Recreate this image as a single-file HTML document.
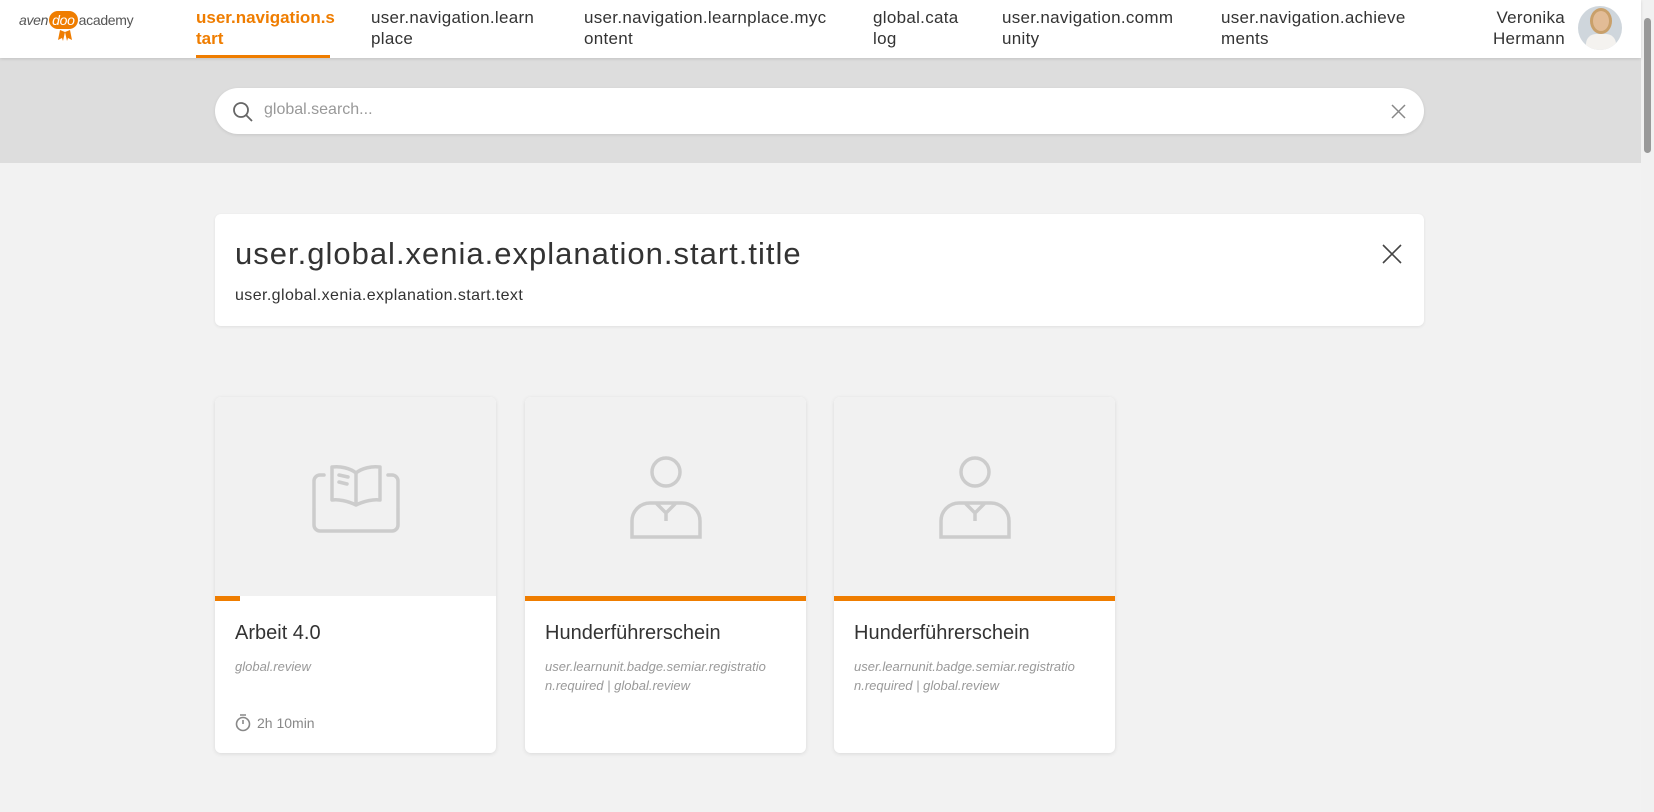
<!DOCTYPE html>
<html><head><meta charset="utf-8"><style>
*{margin:0;padding:0;box-sizing:border-box}
body{width:1654px;height:812px;overflow:hidden;background:#f2f2f2;font-family:"Liberation Sans",sans-serif;color:#333;position:relative}
.hdr{position:absolute;left:0;top:0;width:1641px;height:58px;background:#fff;box-shadow:0 1px 3px rgba(0,0,0,.12);z-index:2}
.nav{position:absolute;top:7px;font-size:17px;letter-spacing:0.3px;line-height:21px;color:#333}
.nav.act{color:#ef7d00;font-weight:bold;letter-spacing:0}
.band{position:absolute;left:0;top:58px;width:1641px;height:105px;background:#ddd}
.search{position:absolute;left:215px;top:88px;width:1209px;height:46px;background:#fff;border-radius:23px;box-shadow:0 1px 3px rgba(0,0,0,.1)}
.search span{position:absolute;left:49px;top:13px;font-size:16px;color:#999}
.exp{position:absolute;left:215px;top:214px;width:1209px;height:112px;background:#fff;border-radius:6px;box-shadow:0 1px 3px rgba(0,0,0,.08)}
.exp h1{position:absolute;left:20px;top:22px;font-size:31px;letter-spacing:1px;font-weight:normal;color:#333}
.exp p{position:absolute;left:20px;top:73px;font-size:16px;letter-spacing:0.4px}
.card{position:absolute;top:397px;width:281px;height:356px;background:#fff;border-radius:6px;box-shadow:0 1px 4px rgba(0,0,0,.1);overflow:hidden}
.img{position:absolute;left:0;top:0;width:100%;height:199px;background:#f1f1f1}
.bar{position:absolute;left:0;top:199px;height:5px;background:#ef7d00}
.ct{position:absolute;left:20px;top:225px;font-size:20px;color:#333}
.cs{position:absolute;left:20px;top:260px;font-size:13px;line-height:19px;font-style:italic;color:#999;width:250px}
.sb{position:absolute;right:0;top:0;width:13px;height:812px;background:#f1f1f1}
</style></head><body>
<div class="hdr">
 <div style="position:absolute;left:19px;top:11px;font-size:14px;color:#555;letter-spacing:-0.3px"><span style="font-style:italic">aven</span><span style="display:inline-block;background:#ef7d00;color:#fff;border-radius:12px;padding:1px 3px;margin:0 1px;font-style:italic">doo</span>academy</div>
 <svg style="position:absolute;left:58px;top:30px" width="14" height="12"><path d="M2 0 L0 10 L4 8 L5 11 L7 2Z M12 0 L14 10 L10 8 L9 11 L7 2Z" fill="#ef7d00"/></svg>
 <div class="nav act" style="left:196px">user.navigation.s<br>tart</div>
 <div style="position:absolute;left:196px;top:55px;width:134px;height:3px;background:#ef7d00"></div>
 <div class="nav" style="left:371px">user.navigation.learn<br>place</div>
 <div class="nav" style="left:584px">user.navigation.learnplace.myc<br>ontent</div>
 <div class="nav" style="left:873px">global.cata<br>log</div>
 <div class="nav" style="left:1002px">user.navigation.comm<br>unity</div>
 <div class="nav" style="left:1221px">user.navigation.achieve<br>ments</div>
 <div class="nav" style="right:76px;text-align:right">Veronika<br>Hermann</div>
 <div style="position:absolute;left:1578px;top:6px;width:44px;height:44px;border-radius:50%;overflow:hidden;background:#cfd6dc">
  <div style="position:absolute;left:15px;top:5px;width:16px;height:20px;border-radius:50%;background:#e2bc96;box-shadow:0 0 0 3px #c9a06a"></div>
  <div style="position:absolute;left:8px;top:28px;width:30px;height:20px;border-radius:10px 10px 0 0;background:#f4f2ef"></div>
 </div>
</div>
<div class="band"></div>
<div class="search">
 <svg style="position:absolute;left:17px;top:13px" width="22" height="22" fill="none" stroke="#666" stroke-width="1.8"><circle cx="9" cy="9" r="7"/><path d="M14 14l6 6"/></svg>
 <span>global.search...</span>
 <svg style="position:absolute;right:18px;top:16px" width="15" height="15" stroke="#888" stroke-width="1.5"><path d="M1 1l13 13M14 1L1 14"/></svg>
</div>
<div class="exp">
 <h1>user.global.xenia.explanation.start.title</h1>
 <p>user.global.xenia.explanation.start.text</p>
 <svg style="position:absolute;right:22px;top:30px" width="20" height="20" stroke="#444" stroke-width="1.6"><path d="M1 1l18 18M19 1L1 19"/></svg>
</div>
<div class="card" style="left:215px">
 <div class="img"><svg style="position:absolute;left:97px;top:66px" width="88" height="70" fill="none" stroke="#ccc" stroke-width="3.5" stroke-linejoin="round" stroke-linecap="round"><path d="M12 12 H8 a6 6 0 0 0-6 6 V62 a6 6 0 0 0 6 6 H80 a6 6 0 0 0 6-6 V18 a6 6 0 0 0-6-6 H76"/><path d="M44 42 C36 38 26 36 20 37 V4 C28 3 38 5 44 10 C50 5 60 3 68 4 V37 C62 36 52 38 44 42Z M44 10 V42"/><path d="M27 12 L36 14 M27 19 L35 21"/></svg></div>
 <div class="bar" style="width:25px"></div>
 <div class="ct">Arbeit 4.0</div>
 <div class="cs">global.review</div>
 <svg style="position:absolute;left:20px;top:317px" width="16" height="18" fill="none" stroke="#888" stroke-width="1.6"><circle cx="8" cy="10" r="6.5"/><path d="M8 10V6M5 1h6"/></svg>
 <div style="position:absolute;left:42px;top:318px;font-size:14px;color:#888">2h 10min</div>
</div>
<div class="card" style="left:525px">
 <div class="img"><svg style="position:absolute;left:103px;top:58px" width="76" height="84" fill="none" stroke="#ccc" stroke-width="3.5"><circle cx="38" cy="17" r="14"/><path d="M4 82 V66 a18 18 0 0 1 18-18 H54 a18 18 0 0 1 18 18 V82 H4Z M28 48 L38 58 L48 48 M38 58 V66"/></svg></div>
 <div class="bar" style="width:100%"></div>
 <div class="ct">Hunderführerschein</div>
 <div class="cs">user.learnunit.badge.semiar.registratio<br>n.required | global.review</div>
</div>
<div class="card" style="left:834px">
 <div class="img"><svg style="position:absolute;left:103px;top:58px" width="76" height="84" fill="none" stroke="#ccc" stroke-width="3.5"><circle cx="38" cy="17" r="14"/><path d="M4 82 V66 a18 18 0 0 1 18-18 H54 a18 18 0 0 1 18 18 V82 H4Z M28 48 L38 58 L48 48 M38 58 V66"/></svg></div>
 <div class="bar" style="width:100%"></div>
 <div class="ct">Hunderführerschein</div>
 <div class="cs">user.learnunit.badge.semiar.registratio<br>n.required | global.review</div>
</div>
<div class="sb"><div style="position:absolute;left:3px;top:18px;width:7px;height:135px;background:#999;border-radius:4px"></div></div>
</body></html>
